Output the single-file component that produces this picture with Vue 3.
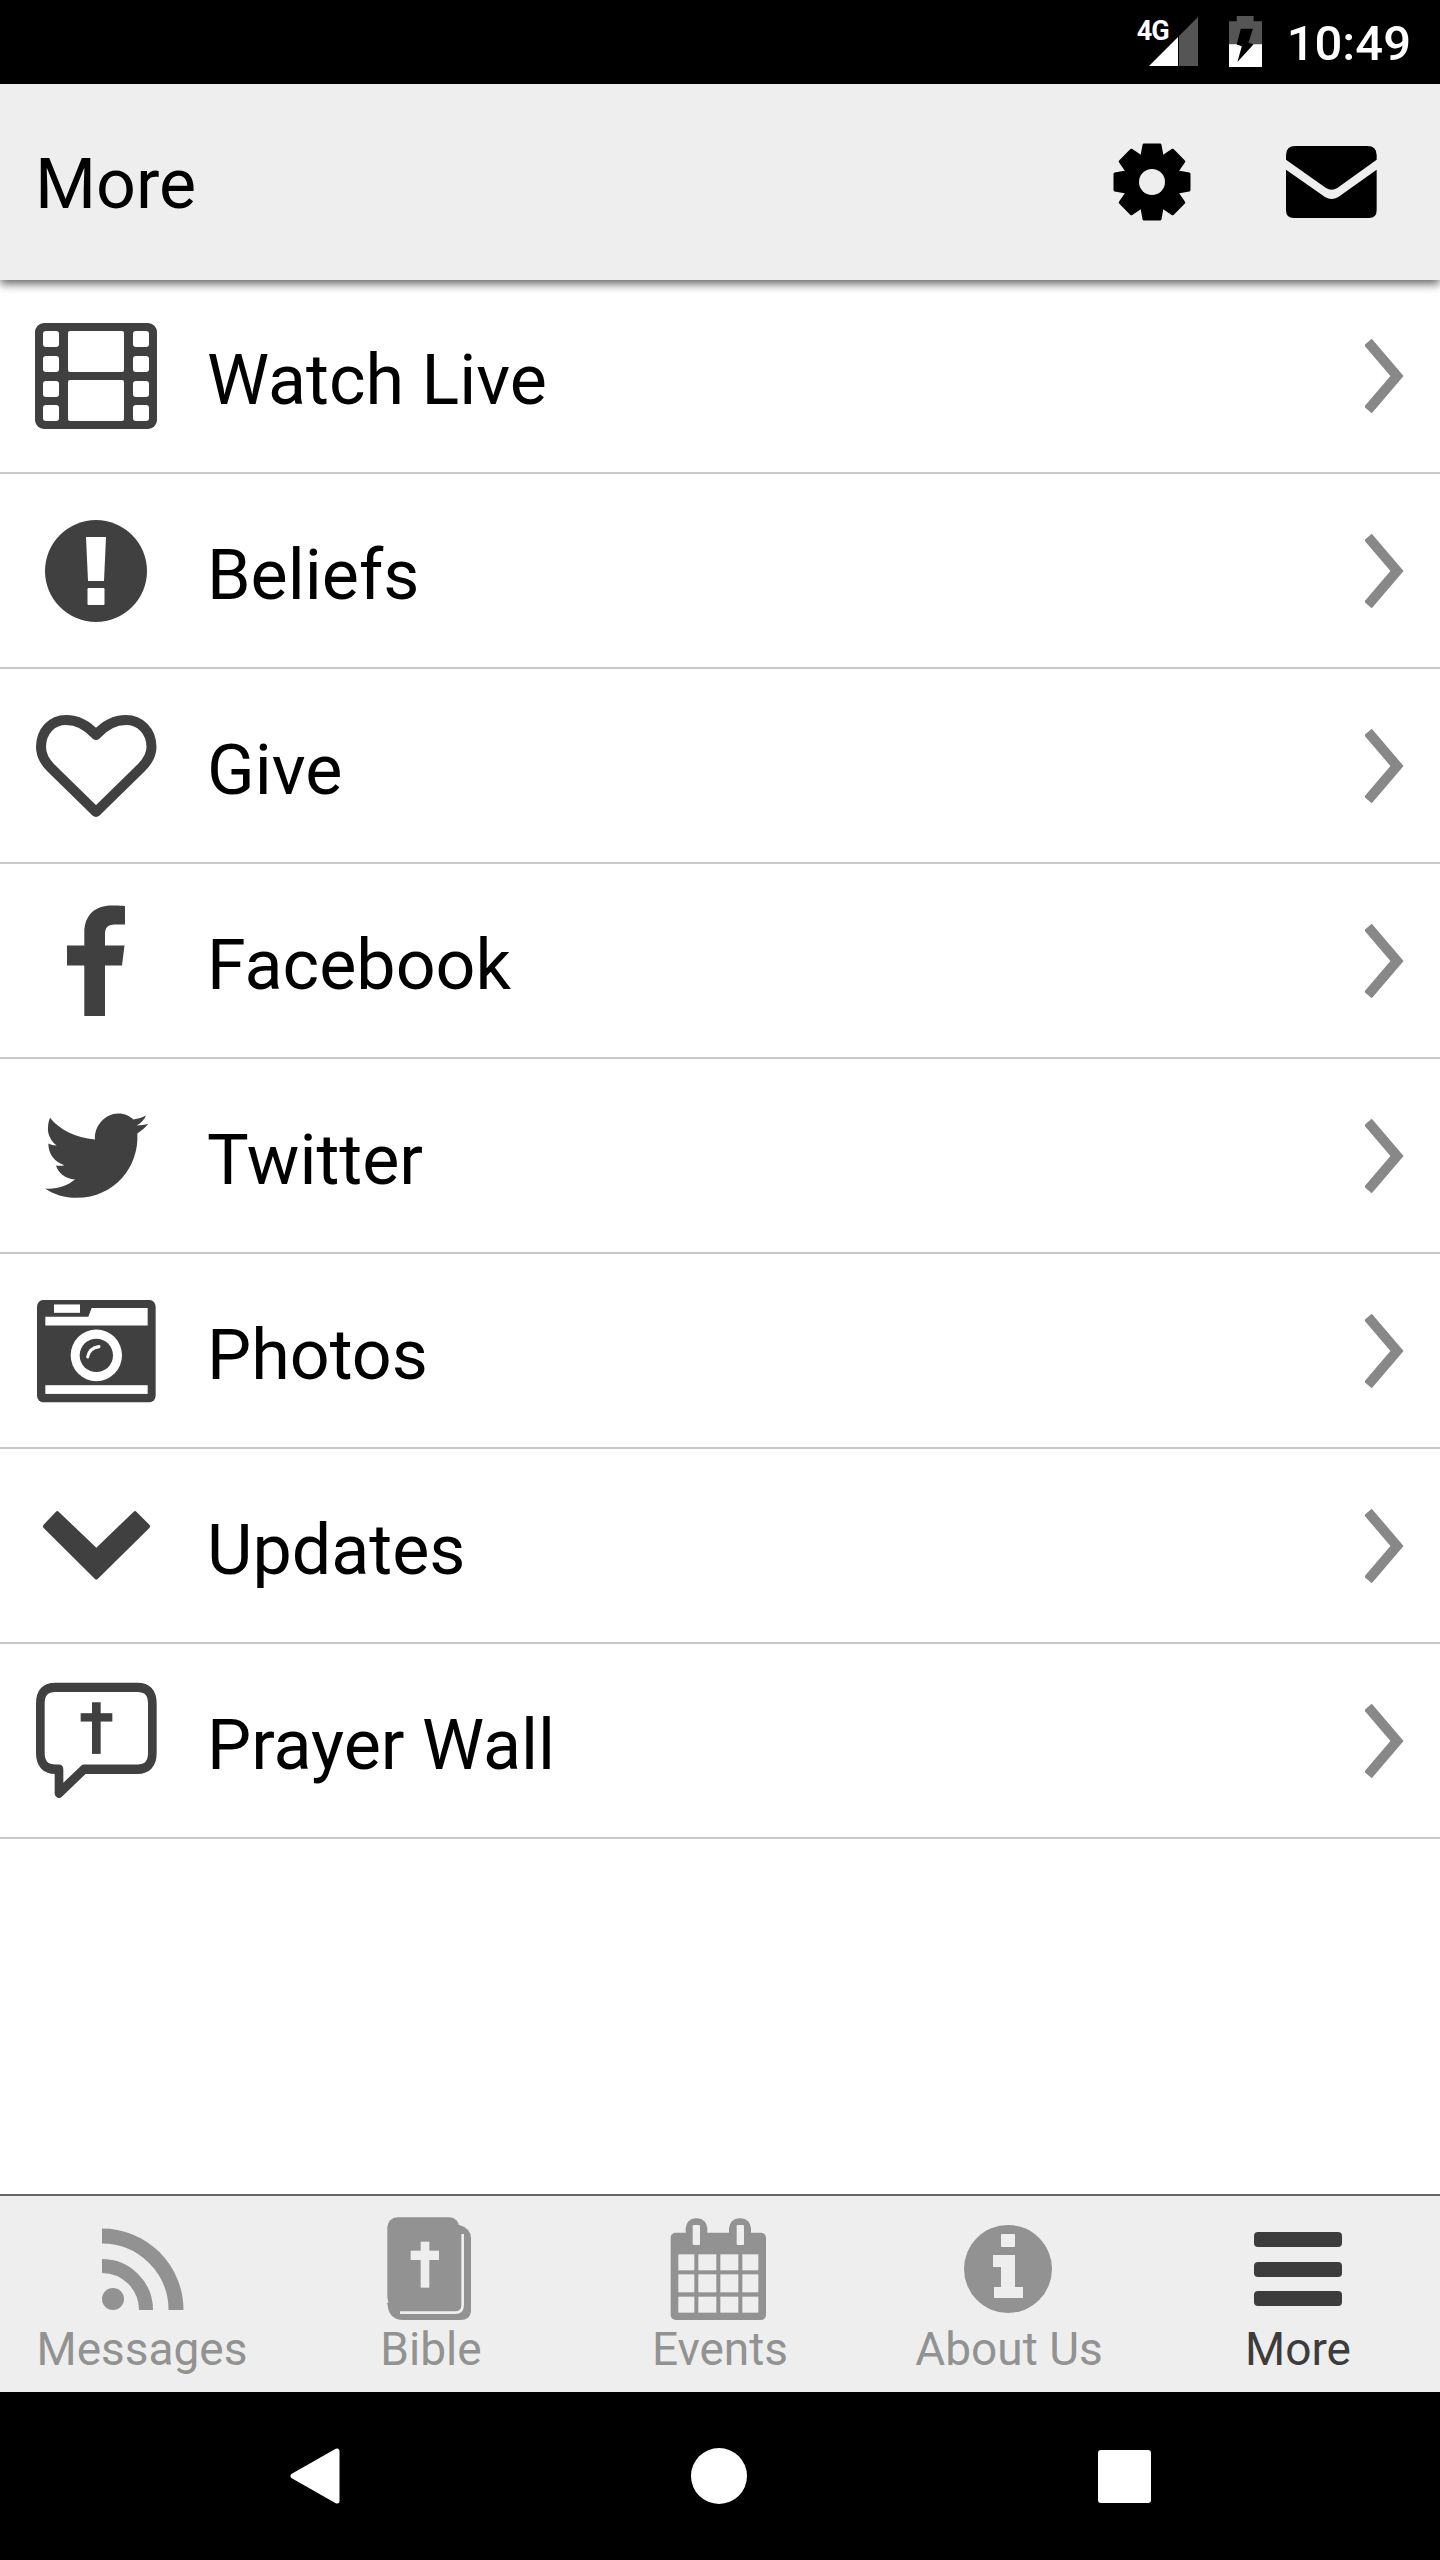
<template>
  <div class="phone">
    <div class="status">
      <div class="signal">
        <span class="net">4G</span>
        <svg width="50" height="50" viewBox="0 0 50 50">
          <polygon points="0,49 29,20 29,49" fill="#fff" />
          <polygon points="30,19 49,0 49,49 30,49" fill="#555" />
        </svg>
      </div>
      <svg class="battery" width="33" height="51" viewBox="507 48 98 152" preserveAspectRatio="none">
        <path d="M530 48h50v16h25v68H507V64h23z" fill="#555" />
        <rect x="507" y="132" width="98" height="68" fill="#fff" />
        <polygon points="542,86 578,86 565,128 580,132 532,185 545,138 530,133" fill="#000" />
      </svg>
      <span class="clock">10:49</span>
    </div>

    <header class="topbar">
      <h1>More</h1>
      <div class="actions">
        <svg width="80" height="80" viewBox="0 0 80 80">
          <circle cx="40" cy="40" r="29" fill="#000" />
          <polygon
            v-for="deg in [0, 45, 90, 135, 180, 225, 270, 315]"
            :key="deg"
            points="30,14 32,3 48,3 50,14"
            fill="#000"
            stroke="#000"
            stroke-width="3"
            stroke-linejoin="round"
            :transform="`rotate(${deg} 40 40)`"
          />
          <circle cx="40" cy="40" r="13" fill="#eee" />
        </svg>
        <svg width="91" height="72" viewBox="678 437 273 216">
          <path d="M678 465Q678 437 706 437H922Q950 437 950 465V478L832 563Q815 574 798 563L678 478Z" />
          <path d="M678 508L795 590Q815 602 835 590L950 508V630Q950 653 927 653H701Q678 653 678 630Z" />
        </svg>
      </div>
    </header>

    <ul class="list">
      <li v-for="item in items" :key="item.label" class="row">
        <svg v-if="item.icon === 'film'" class="ico" width="124" height="124" viewBox="0 0 124 124">
          <rect x="0" y="9" width="122" height="106" rx="9" />
          <g fill="#fff">
            <rect v-for="y in [17, 42, 67, 91]" :key="'l' + y" x="8" :y="y" width="16" height="16" rx="3" />
            <rect v-for="y in [17, 42, 67, 91]" :key="'r' + y" x="98" :y="y" width="16" height="16" rx="3" />
            <rect x="33" y="17" width="56" height="41" rx="2" />
            <rect x="33" y="66" width="56" height="41" rx="2" />
          </g>
        </svg>

        <svg v-else-if="item.icon === 'alert'" class="ico" width="124" height="124" viewBox="0 0 124 124">
          <circle cx="61" cy="62" r="51" />
          <path d="M51 28H71L69 72H53Z" fill="#fff" />
          <rect x="52.5" y="79" width="17" height="17" rx="1" fill="#fff" />
        </svg>

        <svg v-else-if="item.icon === 'heart'" class="ico" width="124" height="124" viewBox="0 0 124 124">
          <path
            d="M61 108L16 64C9 57 6 50 6 43C6 27 17 16 31 16C43 16 53 22 61 31C69 22 79 16 91 16C105 16 116.5 27 116.5 43C116.5 50 113 57 106 64Z"
            fill="none"
            stroke="#404040"
            stroke-width="10"
            stroke-linejoin="round"
          />
        </svg>

        <svg v-else-if="item.icon === 'facebook'" class="ico" width="124" height="124" viewBox="0 0 124 124">
          <path d="M70 117V66.5H87L89.5 46.5H70V36C70 29 72 25.5 80 25.5H90V7C88 6.7 83 6.5 77 6.5C60 6.5 49.3 16 49.3 34V46.5H32V66.5H49.3V117Z" />
        </svg>

        <svg v-else-if="item.icon === 'twitter'" class="ico" width="124" height="124" viewBox="45 13.5 372 372">
          <path d="M75 297C110 300 140 290 165 270C135 268 115 250 108 228C117 230 125 229 133 227C105 218 85 195 85 162C92 166 100 168 110 168C92 155 82 132 84 115C84 105 86 95 90 85C120 122 165 145 225 150C222 110 255 72 295 72C315 72 330 80 340 90C355 88 368 84 378 78C373 90 364 101 350 108C362 108 375 106 385 103C376 115 365 124 352 132C358 230 285 325 170 325C135 325 100 315 75 297Z" />
        </svg>

        <svg v-else-if="item.icon === 'camera'" class="ico" width="124" height="124" viewBox="105 53.5 372 341" preserveAspectRatio="none">
          <rect x="111" y="84" width="356" height="281" rx="18" />
          <g fill="#fff">
            <rect x="162" y="96" width="78" height="23" />
            <polygon points="136,130 265,130 275,106 443,106 443,154 136,154" />
            <rect x="136" y="318" width="307" height="24" />
            <ellipse cx="289" cy="236" rx="77" ry="71" />
          </g>
          <ellipse cx="289" cy="236" rx="50" ry="46" />
          <path d="M263 240Q268 216 297 212" fill="none" stroke="#fff" stroke-width="9" stroke-linecap="round" />
        </svg>

        <svg v-else-if="item.icon === 'updates'" class="ico" width="124" height="124" viewBox="105 589.5 372 341" preserveAspectRatio="none">
          <polygon points="135,706 172,670 289,773 405,670 444,706 289,846" stroke="#404040" stroke-width="12" stroke-linejoin="round" />
        </svg>

        <svg v-else class="ico" width="124" height="124" viewBox="105 1126 372 341" preserveAspectRatio="none">
          <path
            d="M166 1149H412Q457 1149 457 1194V1329Q457 1374 412 1374H252L177 1440V1374H166Q121 1374 121 1329V1194Q121 1149 166 1149Z"
            fill="none"
            stroke="#404040"
            stroke-width="26"
            stroke-linejoin="round"
          />
          <rect x="276" y="1190" width="26" height="142" />
          <rect x="242" y="1220" width="95" height="23" />
        </svg>

        <span class="label">{{ item.label }}</span>

        <svg class="chevron" width="40" height="80" viewBox="0 0 40 80">
          <polyline points="3,6 32,40 3,74" fill="none" stroke="#888" stroke-width="10" />
        </svg>
      </li>
    </ul>

    <nav class="tabs">
      <div v-for="tab in tabs" :key="tab.label" class="tab" :class="{ active: tab.icon === 'menu' }">
        <svg v-if="tab.icon === 'rss'" width="110" height="110" viewBox="0 0 110 110">
          <circle cx="26" cy="84" r="11" />
          <path d="M15 51A44 44 0 0 1 59 95" fill="none" stroke="#929292" stroke-width="14" />
          <path d="M15 21A74 74 0 0 1 89 95" fill="none" stroke="#929292" stroke-width="15" />
        </svg>

        <svg v-else-if="tab.icon === 'bible'" width="110" height="110" viewBox="18 15 330 330">
          <path d="M240 45H268Q303 55 303 85V300Q303 330 270 330H100Q55 330 52 280Z" />
          <rect x="52" y="22" width="216" height="270" rx="30" />
          <path d="M278 72V285Q278 308 255 308H90" fill="none" stroke="#eee" stroke-width="8" />
          <g fill="#eee">
            <rect x="152" y="95" width="26" height="138" />
            <rect x="122" y="122" width="85" height="28" />
          </g>
        </svg>

        <svg v-else-if="tab.icon === 'calendar'" width="110" height="110" viewBox="45 15 330 330">
          <rect x="62" y="68" width="286" height="262" rx="15" />
          <rect x="107" y="25" width="65" height="80" rx="30" />
          <rect x="237" y="25" width="66" height="80" rx="30" />
          <g fill="#eee">
            <rect x="128" y="45" width="22" height="60" rx="4" />
            <rect x="260" y="45" width="22" height="60" rx="4" />
            <template v-for="r in calRows" :key="r.y">
              <rect v-for="c in calCols" :key="c.x" :x="c.x" :y="r.y" :width="c.w" :height="r.h" />
            </template>
          </g>
        </svg>

        <svg v-else-if="tab.icon === 'info'" width="110" height="110" viewBox="0 0 110 110">
          <circle cx="54" cy="54" r="44" />
          <g fill="#eee">
            <rect x="47" y="19" width="14" height="13" rx="1" />
            <path d="M39 40H61V72H69V83H40V72H47V52H39Z" />
          </g>
        </svg>

        <svg v-else width="110" height="110" viewBox="0 0 110 110" fill="#3c3c3c">
          <rect x="11" y="17" width="88" height="15" rx="4" />
          <rect x="11" y="47" width="88" height="15" rx="4" />
          <rect x="11" y="76" width="88" height="15" rx="4" />
        </svg>

        <span>{{ tab.label }}</span>
      </div>
    </nav>

    <div class="sysnav">
      <svg width="50" height="58" viewBox="0 0 50 58">
        <polygon points="3,29 47,4 47,54" fill="#fff" stroke="#fff" stroke-width="5" stroke-linejoin="round" />
      </svg>
      <div class="home"></div>
      <div class="recent"></div>
    </div>
  </div>
</template>

<script setup>
const items = [
  { label: 'Watch Live', icon: 'film' },
  { label: 'Beliefs', icon: 'alert' },
  { label: 'Give', icon: 'heart' },
  { label: 'Facebook', icon: 'facebook' },
  { label: 'Twitter', icon: 'twitter' },
  { label: 'Photos', icon: 'camera' },
  { label: 'Updates', icon: 'updates' },
  { label: 'Prayer Wall', icon: 'prayer' }
]

const tabs = [
  { label: 'Messages', icon: 'rss' },
  { label: 'Bible', icon: 'bible' },
  { label: 'Events', icon: 'calendar' },
  { label: 'About Us', icon: 'info' },
  { label: 'More', icon: 'menu' }
]

// calendar cells, in the icon's own units
const calCols = [
  { x: 85, w: 48 },
  { x: 145, w: 54 },
  { x: 211, w: 54 },
  { x: 277, w: 48 }
]
const calRows = [
  { y: 133, h: 48 },
  { y: 193, h: 54 },
  { y: 260, h: 48 }
]
</script>

<style>
html,
body {
  margin: 0;
  background: #fff;
}
</style>

<style scoped>
.phone {
  width: 1440px;
  height: 2560px;
  display: flex;
  flex-direction: column;
  overflow: hidden;
  font-family: Roboto, "Liberation Sans", sans-serif;
  background: #fff;
}

.status {
  height: 84px;
  flex: none;
  box-sizing: border-box;
  padding: 17px 29px 0 0;
  background: #000;
  display: flex;
  justify-content: flex-end;
  align-items: flex-start;
  color: #fff;
}

.signal {
  position: relative;
  width: 50px;
  height: 50px;
  margin-right: 30px;
}

.net {
  position: absolute;
  left: -12px;
  top: -1px;
  font-size: 27px;
  line-height: 30px;
  font-weight: 700;
  letter-spacing: -1px;
}

.battery {
  margin-top: -1px;
  margin-right: 25px;
}

.clock {
  font-size: 49px;
  line-height: 54px;
  font-weight: 500;
}

.topbar {
  height: 195px;
  flex: none;
  box-sizing: border-box;
  padding: 0 63px 0 35px;
  display: flex;
  align-items: center;
  justify-content: space-between;
  background: #eee;
  box-shadow: 0 1px 0 #eee, 0 5px 9px rgba(0, 0, 0, 0.6);
  position: relative;
}

.topbar h1 {
  margin: 5px 0 0;
  font-size: 70px;
  font-weight: 400;
  color: #000;
}

.actions {
  display: flex;
  align-items: center;
  gap: 94px;
}

.list {
  flex: 1;
  margin: 0;
  padding: 0;
  list-style: none;
}

.row {
  height: 195px;
  box-sizing: border-box;
  border-bottom: 2px solid #c8c8c8;
  padding: 0 35px;
  display: flex;
  align-items: center;
}

.ico {
  flex: none;
  margin-right: 48px;
  fill: #404040;
}

.label {
  flex: 1;
  padding-top: 8px;
  font-size: 70px;
  color: #000;
}

.chevron {
  flex: none;
}

.tabs {
  height: 198px;
  flex: none;
  box-sizing: border-box;
  border-top: 2px solid #666;
  background: #eee;
  display: grid;
  grid-template-columns: repeat(5, 289px);
  justify-content: center;
  fill: #929292;
  color: #929292;
  font-size: 46px;
}

.tab {
  display: flex;
  flex-direction: column;
  align-items: center;
  padding-top: 19px;
  line-height: 48px;
}

.tab.active {
  color: #3c3c3c;
}

.sysnav {
  height: 168px;
  flex: none;
  background: #000;
  display: flex;
  align-items: center;
  justify-content: center;
  gap: 351px;
}

.home {
  width: 56px;
  height: 56px;
  border-radius: 50%;
  background: #fff;
}

.recent {
  width: 53px;
  height: 53px;
  border-radius: 3px;
  background: #fff;
}
</style>
